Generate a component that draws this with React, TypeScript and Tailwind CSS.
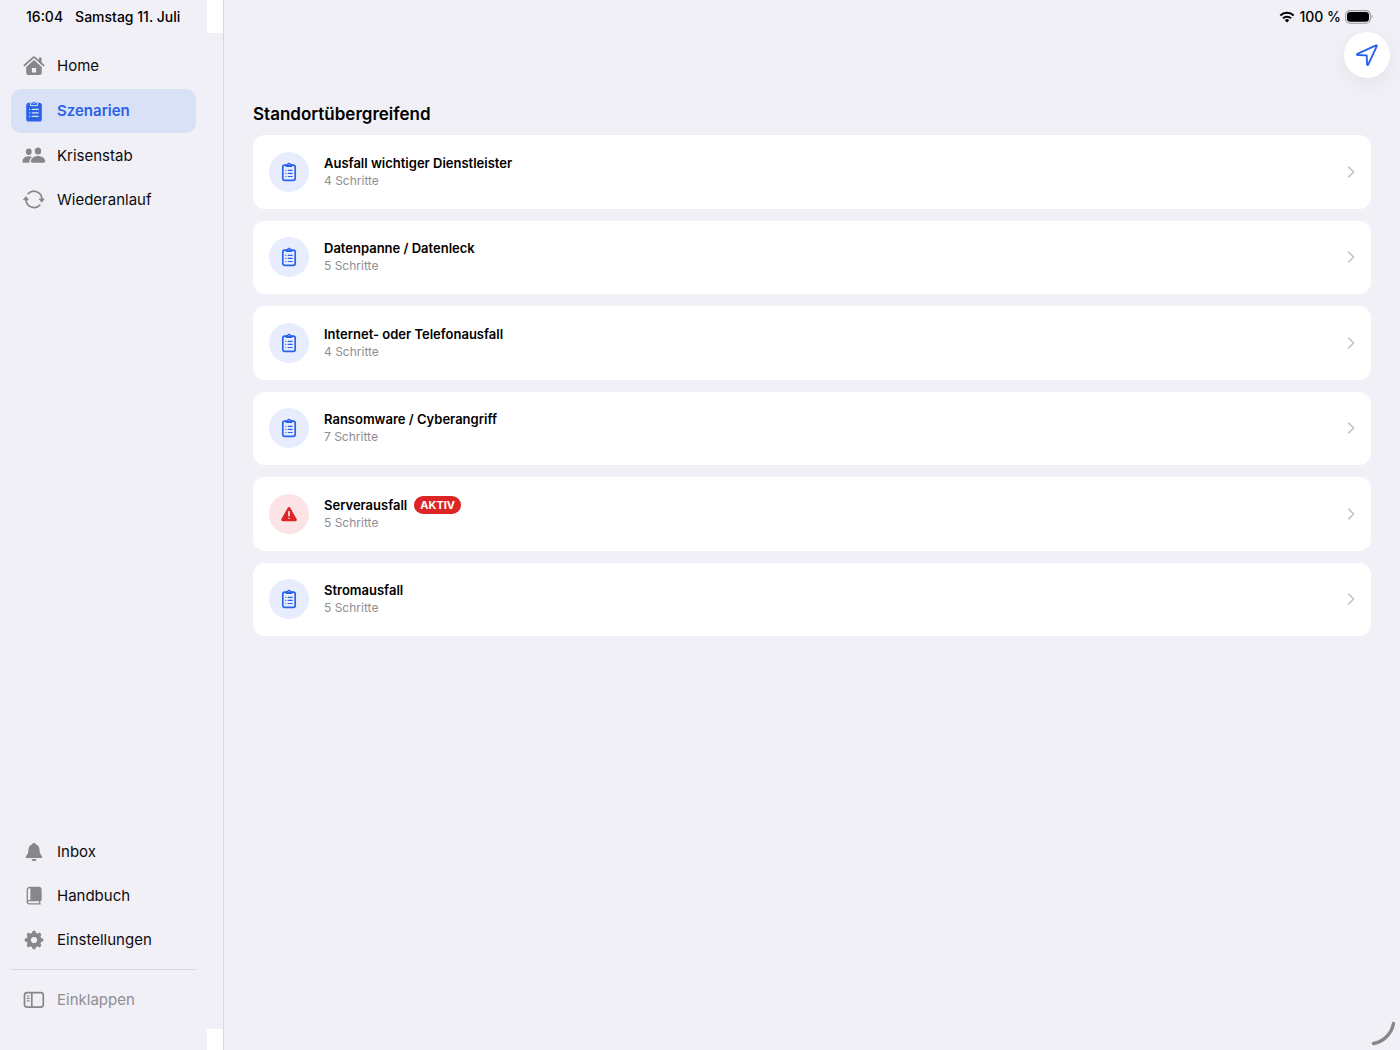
import React from "react";

const HomeIcon = () => (
    <svg width="22" height="21" viewBox="0 0 22 21" fill="none">
        <path d="M1.4 10.4 10.1 2.600a1.300 1.300 0 0 1 1.800 0l8.700 7.800" stroke="currentColor" strokeWidth="1.900" strokeLinecap="round" strokeLinejoin="round" />
        <path d="M16 2.600h2.500v5.400L16 5.800z" fill="currentColor" />
        <path fillRule="evenodd" d="M11 4.900 18.800 11.900v6.200a1.800 1.800 0 0 1-1.800 1.800H5a1.800 1.800 0 0 1-1.800-1.800v-6.200zM8.900 12.900v4.600h4.200v-4.600z" fill="currentColor" />
    </svg>
);

const ClipboardFillIcon = () => (
    <svg width="22" height="22" viewBox="0 0 22 22">
        <rect x="3.200" y="2.800" width="15.600" height="18.700" rx="2.600" fill="currentColor" />
        <path
            d="M7.400 5.600V3.700c0-.6.300-.9.900-.9h.7a2.100 2.100 0 0 1 4 0h.7c.6 0 .9.300.9.900v1.900z"
            fill="currentColor"
            stroke="#d9e1f6"
            strokeWidth="1"
        />
        <circle cx="11" cy="3.300" r=".7" fill="#d9e1f6" />
        <path d="M6.600 9.400h.1M9.300 9.400h5.900M6.600 12.900h.1M9.300 12.900h5.900M6.600 16.400h.1M9.300 16.400h5.900" stroke="#d9e1f6" strokeWidth="1.300" strokeLinecap="round" />
    </svg>
);

const PeopleIcon = () => (
    <svg width="24" height="20" viewBox="0 0 24 20" fill="currentColor">
        <ellipse cx="6.800" cy="5.700" rx="2.900" ry="3.200" />
        <path d="M.5 15.200c0-2.800 2.700-5 6.200-5 1.300 0 2.400.3 3.400.8-1.700 1.200-2.700 2.800-2.700 4.600 0 .4 0 .8.200 1.100H1.800c-.9 0-1.300-.5-1.300-1.500z" />
        <ellipse cx="16" cy="5" rx="3.200" ry="3.600" />
        <path d="M8.900 15.300c0-2.900 3.100-5.200 7.100-5.200s7.100 2.300 7.100 5.200c0 1-.5 1.400-1.500 1.400H10.400c-1 0-1.500-.4-1.500-1.400z" />
    </svg>
);

const CycleIcon = () => (
    <svg width="22" height="20" viewBox="0 0 22 20" fill="none" stroke="currentColor" strokeWidth="1.700" strokeLinecap="round">
        <path d="M5.200 3.700A8 8 0 0 1 18.900 8.600" />
        <path d="M16.800 15.100A8 8 0 0 1 3.100 10.200" />
        <path d="M16.700 9h4.400l-2.200 2.900z" fill="currentColor" strokeWidth="1" strokeLinejoin="round" />
        <path d="M.9 9.800h4.400L3.100 6.900z" fill="currentColor" strokeWidth="1" strokeLinejoin="round" />
    </svg>
);

const BellIcon = () => (
    <svg width="18" height="20" viewBox="0 0 18 20" fill="currentColor">
        <path d="M9 .9c-.9 0-1.500.5-1.700 1.300C4.900 2.900 3.600 4.900 3.500 7.600c-.1 3.300-.7 4.500-2 5.900-.5.500-.7.900-.7 1.400 0 .7.500 1.100 1.300 1.100h13.800c.8 0 1.300-.4 1.300-1.100 0-.5-.2-.9-.7-1.400-1.300-1.400-1.900-2.600-2-5.900-.1-2.700-1.400-4.700-3.800-5.400C10.500 1.400 9.900.9 9 .9z" />
        <path d="M6.500 17.100h5c-.2 1.300-1.200 2.100-2.500 2.100s-2.300-.8-2.500-2.100z" />
    </svg>
);

const BookIcon = () => (
    <svg width="18" height="20" viewBox="0 0 18 20">
        <path
            d="M15.200 17.900H4.300c-1.300 0-2-.7-2-2V3.800c0-1.500.8-2.300 2.300-2.300h9.100c1.500 0 2.300.8 2.300 2.300v9.600c0 .8-.5 1.300-1.300 1.300H4.200c-1.100 0-1.800.6-1.800 1.500"
            fill="none"
            stroke="currentColor"
            strokeWidth="1.300"
            strokeLinecap="round"
        />
        <path d="M5.400 1.500h8.300c1.500 0 2.300.8 2.300 2.300v9.600c0 .8-.5 1.300-1.300 1.300H5.400z" fill="currentColor" />
        <path d="M14.600 14.600v3.200" stroke="currentColor" strokeWidth="1.200" />
    </svg>
);

const GearIcon = () => (
    <svg width="20" height="20" viewBox="0 0 20 20">
        <circle cx="10" cy="10" r="5.200" fill="none" stroke="currentColor" strokeWidth="4.200" />
        <g fill="currentColor">
            {[0, 45, 90, 135, 180, 225, 270, 315].map((angle) => (
                <path key={angle} d="M7.700 4 8.500 1.300c.1-.4.4-.6.800-.6h1.400c.4 0 .7.200.8.600L12.300 4z" transform={`rotate(${angle} 10 10)`} />
            ))}
        </g>
    </svg>
);

const SidebarIcon = () => (
    <svg width="22" height="18" viewBox="0 0 22 18" fill="none" stroke="currentColor" strokeWidth="1.700" strokeLinecap="round">
        <rect x="1.500" y="1.700" width="18.800" height="14.400" rx="2.600" />
        <path d="M8.800 2v14" />
        <path d="M4.200 5h1.900M4.200 7.400h1.900M4.200 9.800h1.900" strokeWidth="1.200" />
    </svg>
);

const ClipboardIcon = () => (
    <svg width="16" height="20" viewBox="0 0 16 20" fill="none">
        <rect x="1.800" y="3.200" width="12.400" height="15.200" rx="1.900" stroke="currentColor" strokeWidth="1.700" />
        <path d="M4.700 4.900V3c0-.5.300-.8.800-.8h.6a2 2 0 0 1 3.800 0h.6c.5 0 .8.300.8.800v1.900z" fill="currentColor" />
        <circle cx="8" cy="2.600" r=".5" fill="#e8edfd" />
        <path d="M4.800 8.300h.1M7.200 8.300h4M4.800 11.400h.1M7.200 11.400h4M4.800 14.500h.1M7.200 14.500h4" stroke="currentColor" strokeWidth="1.200" strokeLinecap="round" />
    </svg>
);

const WarningIcon = () => (
    <svg width="18" height="18" viewBox="0 0 18 18">
        <path d="M9 3.400 15.400 14.800H2.600z" fill="currentColor" stroke="currentColor" strokeWidth="2.800" strokeLinejoin="round" />
        <path d="M9 6.600v4.200M9 13.200v.1" stroke="#fff" strokeWidth="1.500" strokeLinecap="round" />
    </svg>
);

const ChevronIcon = () => (
    <svg width="8" height="12" viewBox="0 0 8 12" fill="none" className="text-[#c4c4c8]">
        <path d="M1.700 1.200 6.700 6l-5 4.800" stroke="currentColor" strokeWidth="1.600" strokeLinecap="round" strokeLinejoin="round" />
    </svg>
);

const WifiIcon = () => (
    <svg width="16" height="12" viewBox="0 0 16 12" fill="none" stroke="currentColor" strokeWidth="2">
        <path d="M1.300 4.500a9.600 9.600 0 0 1 13.400 0" />
        <path d="M4 7.300a5.700 5.700 0 0 1 8 0" />
        <path d="M8 11.400 5.800 9.200a3.100 3.100 0 0 1 4.400 0z" fill="currentColor" stroke="none" />
    </svg>
);

const BatteryIcon = () => (
    <svg width="28" height="14" viewBox="0 0 28 14" fill="none">
        <rect x=".6" y=".6" width="24.800" height="12.600" rx="4.200" stroke="#9c9ca0" strokeWidth="1.100" />
        <rect x="2" y="2" width="22" height="9.800" rx="3.200" fill="#000" />
        <path d="M26.600 5v3.600c.7-.3 1.100-1 1.100-1.800s-.4-1.500-1.100-1.800z" fill="#9c9ca0" />
    </svg>
);

const topLinks = [
    { label: "Home", icon: <HomeIcon />, active: false },
    { label: "Szenarien", icon: <ClipboardFillIcon />, active: true },
    { label: "Krisenstab", icon: <PeopleIcon />, active: false },
    { label: "Wiederanlauf", icon: <CycleIcon />, active: false },
];

const bottomLinks = [
    { label: "Inbox", icon: <BellIcon />, active: false },
    { label: "Handbuch", icon: <BookIcon />, active: false },
    { label: "Einstellungen", icon: <GearIcon />, active: false },
];

const scenarios = [
    { title: "Ausfall wichtiger Dienstleister", steps: 4, active: false },
    { title: "Datenpanne / Datenleck", steps: 5, active: false },
    { title: "Internet- oder Telefonausfall", steps: 4, active: false },
    { title: "Ransomware / Cyberangriff", steps: 7, active: false },
    { title: "Serverausfall", steps: 5, active: true },
    { title: "Stromausfall", steps: 5, active: false },
];

type NavItemProps = { label: string; icon: React.ReactNode; active: boolean };

const NavItem = ({ label, icon, active }: NavItemProps) => (
    <a
        href="#"
        aria-current={active ? "page" : undefined}
        className={`flex items-center gap-[11px] rounded-[10px] px-[11px] py-[11px] text-[15px] leading-5 ${active ? "bg-[#d9e1f6] font-semibold text-[#2a63e8]" : "text-[#0c0c0e]"}`}
    >
        <span className={`flex w-6 justify-center ${active ? "" : "text-[#86868b]"}`}>{icon}</span>
        {label}
    </a>
);

const App = () => {
    return (
        <div className="flex min-h-screen bg-[#f1f0f6] font-['Inter',sans-serif] text-black">
            <aside className="relative flex w-56 shrink-0 flex-col border-r border-[#d9d8de] pr-[27px] pb-[29px] pl-[11px]">
                <div className="absolute top-0 right-0 h-[33px] w-4 bg-white" />
                <div className="absolute right-0 bottom-0 h-[21px] w-4 bg-white" />

                <div className="flex h-11 gap-3 pt-[7px] pl-[15px] text-[14px] leading-5 font-medium whitespace-nowrap">
                    <span>16:04</span>
                    <span>Samstag 11. Juli</span>
                </div>

                <nav className="flex flex-col gap-[2px]">
                    {topLinks.map((item) => (
                        <NavItem key={item.label} {...item} />
                    ))}
                </nav>

                <nav className="mt-auto flex flex-col gap-[2px]">
                    {bottomLinks.map((item) => (
                        <NavItem key={item.label} {...item} />
                    ))}
                </nav>
                <hr className="mt-2 mb-[9px] border-[#d9d8de]" />
                <button type="button" className="flex items-center gap-[11px] px-[11px] py-[11px] text-[15px] leading-5 text-[#8e8e93]">
                    <span className="flex w-6 justify-center text-[#86868b]"><SidebarIcon /></span>
                    Einklappen
                </button>
            </aside>

            <main className="relative flex-1 px-[29px]">
                <div className="absolute top-[7px] right-[27px] flex items-center gap-1 text-[14px] leading-5 font-medium">
                    <WifiIcon />
                    <span>100 %</span>
                    <BatteryIcon />
                </div>
                <button
                    type="button"
                    aria-label="Standort"
                    className="absolute top-8 right-[10px] flex size-[46px] items-center justify-center rounded-full bg-white text-[#2a63e8] shadow-[0_6px_24px_rgba(0,0,0,0.06)]"
                >
                    <svg width="24" height="24" viewBox="0 0 24 24" fill="none">
                        <path d="M21 2.300 2.400 10.900c-.6.300-.5 1.100.2 1.100l9.100.4.400 9.100c0 .7.800.8 1.100.2L21.800 3.100c.2-.5-.3-1-.8-.8z" stroke="currentColor" strokeWidth="1.900" strokeLinejoin="round" />
                    </svg>
                </button>

                <h1 className="pt-[102px] text-[17px] leading-6 font-semibold">Standortübergreifend</h1>

                <ul className="mt-[9px] grid min-h-[501px] auto-rows-fr gap-3">
                    {scenarios.map((item) => (
                        <li key={item.title} className="flex">
                            <a href="#" className="flex flex-1 items-center gap-[15px] rounded-xl bg-white px-4">
                                <span className={`flex size-10 items-center justify-center rounded-full ${item.active ? "bg-[#fce4e6] text-[#dc2626]" : "bg-[#e8edfd] text-[#2a63e8]"}`}>
                                    {item.active ? <WarningIcon /> : <ClipboardIcon />}
                                </span>
                                <span className="flex-1">
                                    <span className="flex h-[18px] items-center gap-[7px] text-[13px] leading-[18px] font-semibold">
                                        {item.title}
                                        {item.active && (
                                            <span className="rounded-full bg-[#dc2626] px-[6px] text-[11px] leading-[18px] font-bold text-white">AKTIV</span>
                                        )}
                                    </span>
                                    <span className="block text-[12px] leading-[18px] text-[#8e8e93]">{item.steps} Schritte</span>
                                </span>
                                <ChevronIcon />
                            </a>
                        </li>
                    ))}
                </ul>

                {/* resize handle in the window corner */}
                <svg width="26" height="26" viewBox="0 0 26 26" fill="none" className="absolute right-[3px] bottom-[3px]">
                    <path d="M2.500 22.500C12.500 20.500 20.500 13 22.500 2.500" stroke="#86868b" strokeWidth="3.400" strokeLinecap="round" />
                </svg>
            </main>
        </div>
    );
};

export default App;
